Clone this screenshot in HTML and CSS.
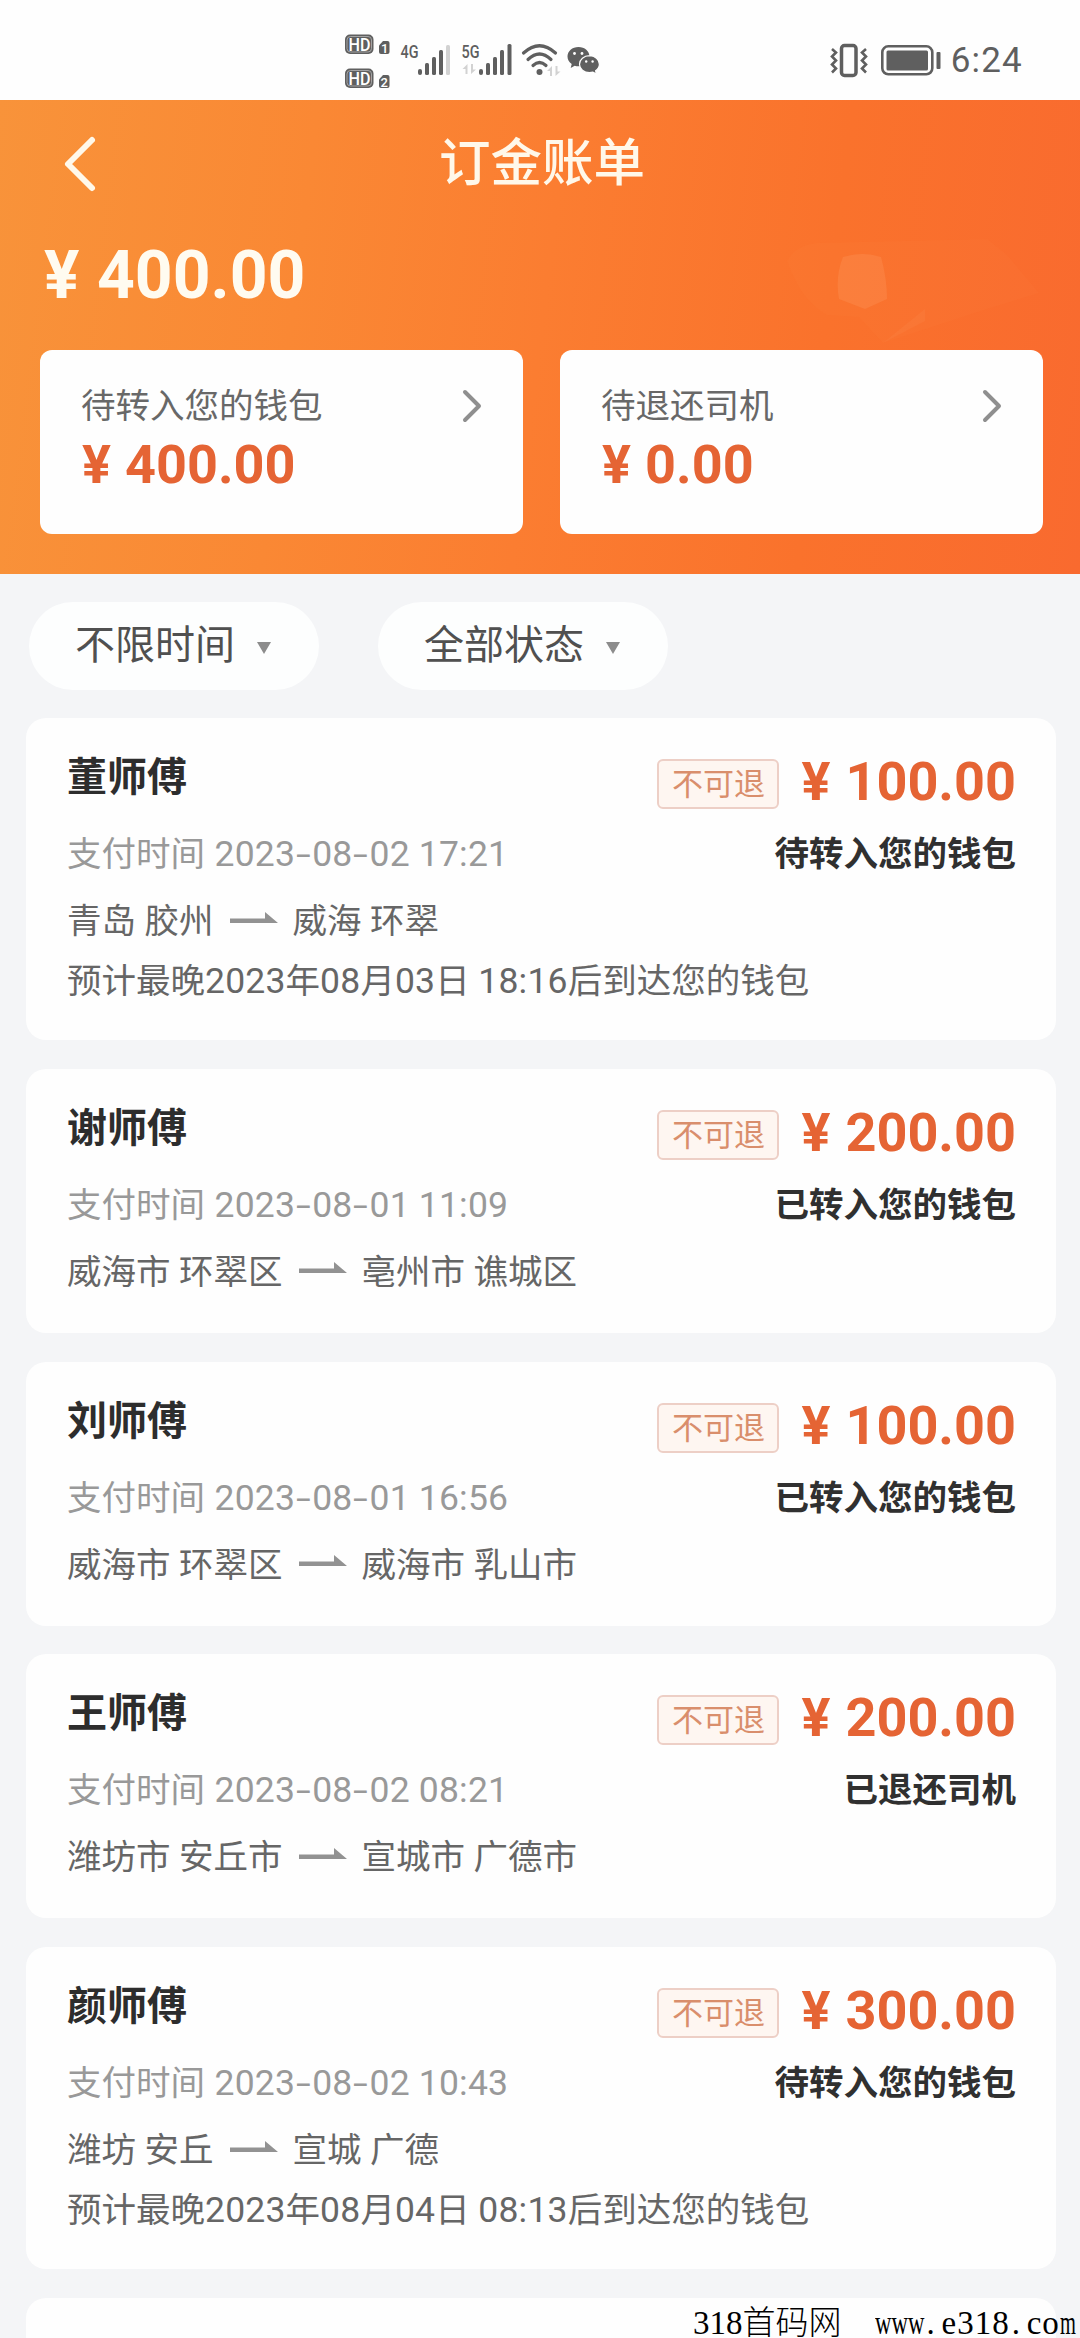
FILE: index.html
```html
<!DOCTYPE html>
<html lang="zh-CN">
<head>
<meta charset="utf-8">
<title>订金账单</title>
<link rel="stylesheet" href="styles.css">
</head>
<body>
<div class="screen">
  <div class="statusbar">
    <svg class="status-left" width="260" height="60" viewBox="342 32 260 60">
      <g fill="#5f5f5f">
        <rect x="345" y="34.5" width="28.500" height="19.500" rx="5"/>
        <rect x="345" y="68.500" width="28.500" height="19.500" rx="5"/>
        <path d="M379 45.500l4-4.500h4.500a2 2 0 0 1 2 2v9a2 2 0 0 1-2 2h-6.500a2 2 0 0 1-2-2z"/>
        <path d="M379 79.500l4-4.500h4.500a2 2 0 0 1 2 2v9a2 2 0 0 1-2 2h-6.500a2 2 0 0 1-2-2z"/>
      </g>
      <g fill="none" stroke="#b5b5b5" stroke-width="0.800">
        <rect x="347" y="36.500" width="24.500" height="15.500" rx="3.500"/>
        <rect x="347" y="70.500" width="24.500" height="15.500" rx="3.500"/>
      </g>
      <g class="glyph-light">
        <text x="348.500" y="50.500" font-size="17.500" textLength="22" lengthAdjust="spacingAndGlyphs">HD</text>
        <text x="348.500" y="84.500" font-size="17.500" textLength="22" lengthAdjust="spacingAndGlyphs">HD</text>
        <text x="381" y="52.500" font-size="13">1</text>
        <text x="380.500" y="86.500" font-size="13">2</text>
      </g>
      <g class="glyph-dark">
        <text x="400.500" y="58" font-size="18" textLength="18" lengthAdjust="spacingAndGlyphs">4G</text>
        <text x="461.500" y="58" font-size="18" textLength="18" lengthAdjust="spacingAndGlyphs">5G</text>
      </g>
      <g fill="#5f5f5f">
        <rect x="418" y="69" width="4" height="6" rx="2"/>
        <rect x="425" y="63" width="4" height="12" rx="1.500"/>
        <rect x="432" y="57" width="4" height="18" rx="1.500"/>
        <rect x="439" y="50" width="4" height="25" rx="1.500"/>
        <rect x="479" y="69" width="4" height="6" rx="2"/>
        <rect x="486" y="63" width="4" height="12" rx="1.500"/>
        <rect x="493" y="57" width="4" height="18" rx="1.500"/>
        <rect x="500" y="50" width="4" height="25" rx="1.500"/>
        <rect x="507.500" y="44" width="4" height="31" rx="1.500"/>
        <circle cx="539.500" cy="72" r="3"/>
      </g>
      <g fill="#d2d2d2">
        <rect x="446" y="45" width="4" height="30" rx="1.500"/>
        <path d="M467.500 64v10h-2v-5h-3zM471 64v10l5-4.500h-3v-5.500z"/>
        <path d="M552 66v10h-2v-5h-3zM555.500 66v10l5-4.500h-3v-5.500z"/>
      </g>
      <g fill="none" stroke="#5f5f5f" stroke-width="3.200" stroke-linecap="round">
        <path d="M523.500 53q16-14.500 32 0"/>
        <path d="M528 59.500q11.500-11 23 0"/>
        <path d="M533 65.500q6.500-6 13 0"/>
      </g>
      <g fill="#5f5f5f">
        <path d="M578.500 47c-6.300 0-11 4.200-11 9.600 0 3.100 1.600 5.700 4.200 7.500l-1 3.900 4-2.200c1.200.4 2.500.5 3.800.5 6.200 0 11-4.300 11-9.700s-4.800-9.600-11-9.600z"/>
        <path stroke="#fff" stroke-width="1.200" d="M589.500 55.700c-5.600 0-10 3.800-10 8.500s4.400 8.500 10 8.500c1.200 0 2.300-.2 3.400-.5l3.600 1.900-.9-3.400c2.300-1.600 3.800-3.900 3.800-6.500 0-4.700-4.400-8.500-9.900-8.500z"/>
      </g>
      <g fill="#fff">
        <circle cx="574.500" cy="53.500" r="1.400"/><circle cx="582" cy="53.500" r="1.400"/>
        <circle cx="586.200" cy="61.500" r="1.200"/><circle cx="592.600" cy="61.500" r="1.200"/>
      </g>
    </svg>
    <div class="status-right">
      <svg width="112" height="36" viewBox="829 43 112 36" fill="none" stroke="#5f5f5f">
        <path stroke-width="2.600" d="M832 49l4 3.500-4 4 4 4-4 4 4 4-4 4M866 49l-4 3.500 4 4-4 4 4 4-4 4 4 4"/>
        <rect x="841.500" y="45.500" width="14.500" height="30" rx="3" stroke-width="3.500"/>
        <rect x="882.300" y="46.300" width="50" height="28" rx="6" stroke-width="2.600"/>
        <rect x="886.500" y="50.500" width="41.500" height="20" rx="1.500" fill="#5f5f5f" stroke="none"/>
        <rect x="936.500" y="52" width="4" height="17" rx="1" fill="#5f5f5f" stroke="none"/>
      </svg>
      <span class="clock">6:24</span>
    </div>
  </div>

  <header class="header">
    <svg class="header-art" width="270" height="110" viewBox="0 0 270 110">
      <path d="M0 22Q8 6 30 4L200 0l20 16 32 38L200 70 96 104 72 78 40 76Q14 62 0 22z" fill="#ffa050" opacity="0.060"/>
      <path d="M56 18q20-6 38 0q6 22 6 42l-22 10-26-10q-4-22 4-42z" fill="#ffb080" opacity="0.180"/>
      <path d="M96 104l42-34v12z" fill="#ffb080" opacity="0.080"/>
    </svg>
    <div class="navbar">
      <svg class="back" width="36" height="58" viewBox="0 0 36 58"><path d="M30 5L6 29l24 24" fill="none" stroke="#fff8ea" stroke-width="6" stroke-linecap="round" stroke-linejoin="round"/></svg>
      <h1 class="title">订金账单</h1>
    </div>
    <div class="total"><span class="yen">¥</span>400.00</div>
    <div class="summaries">
      <div class="summary">
        <div class="summary-label">待转入您的钱包
          <svg width="22" height="34" viewBox="0 0 22 34"><path d="M4 3l14 14L4 31" fill="none" stroke="#8f8f8f" stroke-width="4" stroke-linecap="round" stroke-linejoin="round"/></svg>
        </div>
        <div class="money"><span class="yen">¥</span>400.00</div>
      </div>
      <div class="summary">
        <div class="summary-label">待退还司机
          <svg width="22" height="34" viewBox="0 0 22 34"><path d="M4 3l14 14L4 31" fill="none" stroke="#8f8f8f" stroke-width="4" stroke-linecap="round" stroke-linejoin="round"/></svg>
        </div>
        <div class="money"><span class="yen">¥</span>0.00</div>
      </div>
    </div>
  </header>

  <div class="filters">
    <div class="pill">不限时间<i class="caret"></i></div>
    <div class="pill">全部状态<i class="caret"></i></div>
  </div>

  <main class="list">
    <article class="card">
      <div class="info">
        <h2 class="name">董师傅</h2>
        <div class="paid">支付时间 <span class="num">2023<b class="dash">-</b>08<b class="dash">-</b>02 17:21</span></div>
        <div class="route">青岛 胶州<svg class="arrow" width="48" height="12" viewBox="0 0 48 12"><path d="M0 6.500h35V0l13 11H0z" fill="#929292"/></svg>威海 环翠</div>
        <div class="eta">预计最晚<span class="num">2023</span>年<span class="num">08</span>月<span class="num">03</span>日 <span class="num">18:16</span>后到达您的钱包</div>
      </div>
      <div class="result">
        <div class="price"><span class="tag">不可退</span><div class="money"><span class="yen">¥</span>100.00</div></div>
        <div class="state">待转入您的钱包</div>
      </div>
    </article>

    <article class="card">
      <div class="info">
        <h2 class="name">谢师傅</h2>
        <div class="paid">支付时间 <span class="num">2023<b class="dash">-</b>08<b class="dash">-</b>01 11:09</span></div>
        <div class="route">威海市 环翠区<svg class="arrow" width="48" height="12" viewBox="0 0 48 12"><path d="M0 6.500h35V0l13 11H0z" fill="#929292"/></svg>亳州市 谯城区</div>
      </div>
      <div class="result">
        <div class="price"><span class="tag">不可退</span><div class="money"><span class="yen">¥</span>200.00</div></div>
        <div class="state">已转入您的钱包</div>
      </div>
    </article>

    <article class="card">
      <div class="info">
        <h2 class="name">刘师傅</h2>
        <div class="paid">支付时间 <span class="num">2023<b class="dash">-</b>08<b class="dash">-</b>01 16:56</span></div>
        <div class="route">威海市 环翠区<svg class="arrow" width="48" height="12" viewBox="0 0 48 12"><path d="M0 6.500h35V0l13 11H0z" fill="#929292"/></svg>威海市 乳山市</div>
      </div>
      <div class="result">
        <div class="price"><span class="tag">不可退</span><div class="money"><span class="yen">¥</span>100.00</div></div>
        <div class="state">已转入您的钱包</div>
      </div>
    </article>

    <article class="card">
      <div class="info">
        <h2 class="name">王师傅</h2>
        <div class="paid">支付时间 <span class="num">2023<b class="dash">-</b>08<b class="dash">-</b>02 08:21</span></div>
        <div class="route">潍坊市 安丘市<svg class="arrow" width="48" height="12" viewBox="0 0 48 12"><path d="M0 6.500h35V0l13 11H0z" fill="#929292"/></svg>宣城市 广德市</div>
      </div>
      <div class="result">
        <div class="price"><span class="tag">不可退</span><div class="money"><span class="yen">¥</span>200.00</div></div>
        <div class="state">已退还司机</div>
      </div>
    </article>

    <article class="card">
      <div class="info">
        <h2 class="name">颜师傅</h2>
        <div class="paid">支付时间 <span class="num">2023<b class="dash">-</b>08<b class="dash">-</b>02 10:43</span></div>
        <div class="route">潍坊 安丘<svg class="arrow" width="48" height="12" viewBox="0 0 48 12"><path d="M0 6.500h35V0l13 11H0z" fill="#929292"/></svg>宣城 广德</div>
        <div class="eta">预计最晚<span class="num">2023</span>年<span class="num">08</span>月<span class="num">04</span>日 <span class="num">08:13</span>后到达您的钱包</div>
      </div>
      <div class="result">
        <div class="price"><span class="tag">不可退</span><div class="money"><span class="yen">¥</span>300.00</div></div>
        <div class="state">待转入您的钱包</div>
      </div>
    </article>

    <article class="card">
      <div class="info"><h2 class="name">王师傅</h2></div>
    </article>
  </main>

  <div class="watermark">318首码网<span class="site"><span class="www">www</span><span class="dot">.</span>e318<span class="dot">.</span>co<span class="m">m</span></span></div>
</div>
</body>
</html>
```
FILE: styles.css
```css
* { box-sizing: border-box; }

body {
  margin: 0;
  background: #f4f5f7;
  font-family: Roboto, "Noto Sans CJK SC", sans-serif;
}

.screen {
  position: relative;
  width: 1080px;
  height: 2338px;
  overflow: hidden;
}

/* system status bar */
.statusbar {
  height: 100px;
  padding: 32px 57px 0 342px;
  background: #fefefe;
  display: flex;
  justify-content: space-between;
}
.glyph-light { fill: #fff; font-weight: 500; }
.glyph-dark { fill: #5f5f5f; font-weight: 500; }
.status-right {
  height: 58px;
  display: flex;
  align-items: center;
  gap: 10px;
}
.clock {
  font-size: 35px;
  line-height: 40px;
  letter-spacing: 1.2px;
  color: #5f5f5f;
}

/* orange header */
.header {
  position: relative;
  height: 474px;
  padding: 32px 37px 0 40px;
  background: linear-gradient(97deg, #f8933a 0%, #fa8834 28%, #fb7d31 50%, #fa722c 75%, #f96a2f 100%);
}
.header-art { position: absolute; left: 787px; top: 139px; }
.navbar {
  height: 64px;
  display: flex;
  align-items: center;
}
.back { margin-left: 22px; }
.title {
  margin: 0 0 0 341px;
  font-size: 51.500px;
  line-height: 64px;
  font-weight: 500;
  color: #fff8ea;
}
.total {
  margin: 45px 0 0 4px;
  font-size: 66px;
  line-height: 70px;
  font-weight: 700;
  color: #fffbf0;
}
.total .yen { display: inline-block; width: 53px; }
.summaries { display: flex; gap: 37px; margin-top: 39px; }
.summary {
  flex: 1;
  height: 184px;
  padding: 32px 40px 0 41px;
  border-radius: 12px;
  background: #fefefe;
}
.summary-label {
  display: flex;
  justify-content: space-between;
  align-items: center;
  font-size: 34.500px;
  line-height: 48px;
  color: #686868;
}

.money {
  font-size: 54px;
  line-height: 48px;
  font-weight: 700;
  color: #e56434;
  white-space: nowrap;
}
.summary .money { margin: 11px 0 0 1px; }
.money .yen { display: inline-block; width: 43px; }

/* filters */
.filters {
  display: flex;
  gap: 59px;
  padding: 28px 0 28px 29px;
}
.pill {
  width: 290px;
  height: 88px;
  padding-left: 46px;
  border-radius: 44px;
  background: #fdfefe;
  display: flex;
  align-items: center;
  font-size: 40px;
  line-height: 60px;
  color: #505050;
}
.caret {
  margin: 3px 0 0 22px;
  border: 7px solid transparent;
  border-top: 12px solid #8c8c8c;
  border-bottom: 0;
}

/* bills */
.list {
  display: flex;
  flex-direction: column;
  gap: 28.800px;
  padding: 0 24px 0 26px;
}
.card {
  display: flex;
  justify-content: space-between;
  padding: 36px 40px 37px 41px;
  border-radius: 20px;
  background: #fefefe;
}
.info { flex: none; width: 560px; }
.name {
  margin: 0;
  font-size: 40px;
  line-height: 48px;
  font-weight: 700;
  color: #2d2d2d;
}
.card:last-child .name { margin-top: 5px; }
.paid, .route, .eta { font-size: 34.500px; line-height: 48px; white-space: nowrap; }
.paid { margin-top: 28px; color: #999; }
.paid .num { margin-left: 1px; }
.route { margin-top: 19px; display: flex; align-items: center; color: #666; }
.eta { margin-top: 14px; line-height: 44px; color: #666; }
.num { font-size: 35.500px; line-height: 1; letter-spacing: 0.200px; }
.dash {
  display: inline-block;
  width: 17px;
  text-align: center;
  font-weight: 400;
  transform: scaleX(1.500);
}
.arrow { margin: -7px 15px 0 16px; }
.result {
  flex: none;
  display: flex;
  flex-direction: column;
  align-items: flex-end;
  padding-top: 4px;
}
.price { display: flex; align-items: center; gap: 22px; height: 48px; }
.price .money .yen { width: 44px; }
.tag {
  width: 122px;
  height: 50px;
  margin-top: 4px;
  border: 2px solid #edcfc6;
  border-radius: 6px;
  background: #fef6f1;
  text-align: center;
  font-size: 31px;
  line-height: 48px;
  color: #d98e6c;
}
.state {
  margin-top: 24px;
  font-size: 34.500px;
  line-height: 48px;
  font-weight: 700;
  color: #303030;
}

.watermark {
  position: absolute;
  left: 693px;
  top: 2303px;
  display: flex;
  font-family: "Liberation Serif", "Noto Sans CJK SC", serif;
  font-weight: 300;
  font-size: 33px;
  line-height: 40px;
  color: #000;
  white-space: nowrap;
}
.site { margin-left: 33px; display: flex; letter-spacing: 1px; }
.www, .m { letter-spacing: 0; transform-origin: left; }
.www { width: 50px; transform: scaleX(0.690); }
.m { width: 16px; transform: scaleX(0.620); }
.dot { width: 17px; padding-left: 2px; }
```
